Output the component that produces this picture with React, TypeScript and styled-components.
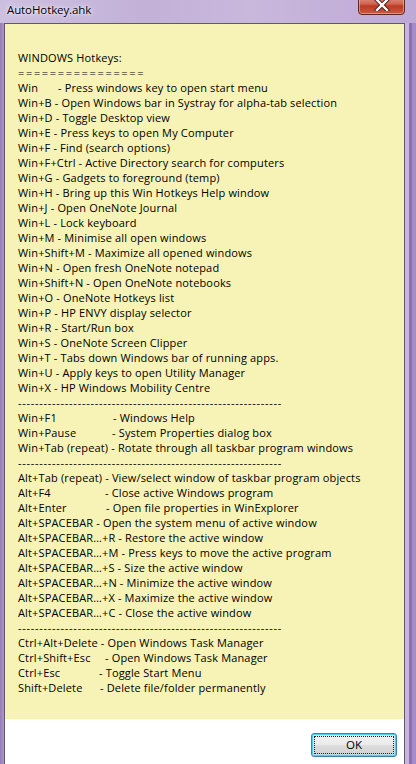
import React from 'react';
import styled, { createGlobalStyle } from 'styled-components';

const Global = createGlobalStyle`
  html, body { margin: 0; padding: 0; width: 416px; height: 764px; overflow: hidden; }
  body { font-family: "Open Sans", "Noto Sans", sans-serif; -webkit-font-smoothing: antialiased; }
  #root { width: 416px; height: 764px; }
`;

const Window = styled.div`
  width: 416px;
  height: 764px;
  box-sizing: border-box;
  display: flex;
  flex-direction: column;
  padding: 0 11px 0 4px;
  background:
    linear-gradient(to right, #c9b4e0 0, #c9b4e0 4px, #8a72b0 4px, #8a72b0 7px, #a68cc6 7px, #a68cc6 11px) right 23px / 11px 100% no-repeat,
    linear-gradient(to right, #967bbb 0, #a288c4 2px, #ae96cd 4px) left 23px / 4px 100% no-repeat,
    linear-gradient(to right, #cdbfe0 0%, #c3b1d8 35%, #c9b8dc 60%, #bfa9d6 100%);
`;

const TitleBar = styled.div`
  height: 23px;
  flex: none;
  display: flex;
  justify-content: space-between;
  align-items: flex-start;
  padding-left: 3px;
`;

const Title = styled.span`
  font-size: 11.5px;
  letter-spacing: -0.1px;
  line-height: 20px;
  color: #000;
  text-shadow: 0 0 6px rgba(255, 255, 255, 0.9), 0 0 3px rgba(255, 255, 255, 0.8);
`;

const CloseBtn = styled.div`
  width: 47px;
  height: 20px;
  margin-top: -5px;
  box-sizing: border-box;
  border: 1px solid #5a2a26;
  border-radius: 0 0 4px 4px;
  background: linear-gradient(to bottom, #e3978a 0%, #d0634f 45%, #bb3a24 55%, #cc5a43 100%);
  box-shadow: inset 0 0 0 1px rgba(255, 200, 190, 0.5);
  display: flex;
  align-items: center;
  justify-content: center;
`;

const Client = styled.div`
  flex: 1;
  display: flex;
  flex-direction: column;
  border: 1px solid #5c5a68;
  border-bottom: none;
  min-height: 0;
`;

const Memo = styled.div`
  background: #f7f3b6;
  padding: 26px 0 24px 13px;
  font-size: 11px;
  line-height: 15px;
  letter-spacing: 0.15px;
  color: #000;
`;

const Line = styled.div`
  white-space: pre;
  height: 15px;
`;

const Key = styled.span<{ $w: number }>`
  display: inline-block;
  width: ${(p) => p.$w}px;
`;

const Rule = styled.div<{ $ls: number }>`
  white-space: pre;
  height: 15px;
  letter-spacing: ${(p) => p.$ls}px;
`;

const Footer = styled.div`
  flex: 1;
  background: #ffffff;
  display: flex;
  justify-content: flex-end;
  align-items: flex-start;
  padding: 14px 7px 0 0;
`;

const OkButton = styled.button`
  width: 86px;
  height: 24px;
  box-sizing: border-box;
  border: 1px solid #3c7fb1;
  border-radius: 3px;
  padding: 2px;
  background: linear-gradient(to bottom, #f2f2f2 0%, #ebebeb 48%, #dddddd 52%, #cfcfcf 100%);
  box-shadow: inset 0 0 0 1px #48d1f4, inset 0 0 0 2px rgba(180, 235, 250, 0.7);
  font-family: "Open Sans", "Noto Sans", sans-serif;
  font-size: 11.5px;
  color: #000;
  cursor: default;
  display: flex;
`;

const Focus = styled.span`
  flex: 1;
  border: 1px dotted #222;
  display: flex;
  align-items: center;
  justify-content: center;
  line-height: 14px;
`;

type Row =
  | { text: string }
  | { key: string; desc: string; at: number }
  | { rule: string; ls: number };

const dashes = '-'.repeat(62);

const rows: Row[] = [
  { text: 'WINDOWS Hotkeys:' },
  { rule: '='.repeat(16), ls: 1.66 },
  { key: 'Win', desc: 'Press windows key to open start menu', at: 40 },
  { text: 'Win+B - Open Windows bar in Systray for alpha-tab selection' },
  { text: 'Win+D - Toggle Desktop view' },
  { text: 'Win+E - Press keys to open My Computer' },
  { text: 'Win+F - Find (search options)' },
  { text: 'Win+F+Ctrl - Active Directory search for computers' },
  { text: 'Win+G - Gadgets to foreground (temp)' },
  { text: 'Win+H - Bring up this Win Hotkeys Help window' },
  { text: 'Win+J - Open OneNote Journal' },
  { text: 'Win+L - Lock keyboard' },
  { text: 'Win+M - Minimise all open windows' },
  { text: 'Win+Shift+M - Maximize all opened windows' },
  { text: 'Win+N - Open fresh OneNote notepad' },
  { text: 'Win+Shift+N - Open OneNote notebooks' },
  { text: 'Win+O - OneNote Hotkeys list' },
  { text: 'Win+P - HP ENVY display selector' },
  { text: 'Win+R - Start/Run box' },
  { text: 'Win+S - OneNote Screen Clipper' },
  { text: 'Win+T - Tabs down Windows bar of running apps.' },
  { text: 'Win+U - Apply keys to open Utility Manager' },
  { text: 'Win+X - HP Windows Mobility Centre' },
  { rule: dashes, ls: 0.72 },
  { key: 'Win+F1', desc: 'Windows Help', at: 95 },
  { key: 'Win+Pause', desc: 'System Properties dialog box', at: 94 },
  { text: 'Win+Tab (repeat) - Rotate through all taskbar program windows' },
  { rule: dashes, ls: 0.72 },
  { text: 'Alt+Tab (repeat) - View/select window of taskbar program objects' },
  { key: 'Alt+F4', desc: 'Close active Windows program', at: 87 },
  { key: 'Alt+Enter', desc: 'Open file properties in WinExplorer', at: 88 },
  { text: 'Alt+SPACEBAR - Open the system menu of active window' },
  { text: 'Alt+SPACEBAR…+R - Restore the active window' },
  { text: 'Alt+SPACEBAR…+M - Press keys to move the active program' },
  { text: 'Alt+SPACEBAR…+S - Size the active window' },
  { text: 'Alt+SPACEBAR…+N - Minimize the active window' },
  { text: 'Alt+SPACEBAR…+X - Maximize the active window' },
  { text: 'Alt+SPACEBAR…+C - Close the active window' },
  { rule: dashes, ls: 0.72 },
  { text: 'Ctrl+Alt+Delete - Open Windows Task Manager' },
  { key: 'Ctrl+Shift+Esc', desc: 'Open Windows Task Manager', at: 87 },
  { key: 'Ctrl+Esc', desc: 'Toggle Start Menu', at: 81 },
  { key: 'Shift+Delete', desc: 'Delete file/folder permanently', at: 82 },
];

const CloseIcon = () => (
  <svg width="16" height="12" viewBox="0 0 16 12">
    <path d="M3 1 L13 11 M13 1 L3 11" stroke="#4a1a16" strokeWidth="4.2" strokeLinecap="square" />
    <path d="M3 1 L13 11 M13 1 L3 11" stroke="#ffffff" strokeWidth="2.4" strokeLinecap="square" />
  </svg>
);

export default function App() {
  return (
    <>
      <Global />
      <Window>
        <TitleBar>
          <Title>AutoHotkey.ahk</Title>
          <CloseBtn>
            <CloseIcon />
          </CloseBtn>
        </TitleBar>
        <Client>
          <Memo>
            {rows.map((r, i) => {
              if ('rule' in r) return <Rule key={i} $ls={r.ls}>{r.rule}</Rule>;
              if ('key' in r)
                return (
                  <Line key={i}>
                    <Key $w={r.at}>{r.key}</Key>- {r.desc}
                  </Line>
                );
              return <Line key={i}>{r.text}</Line>;
            })}
          </Memo>
          <Footer>
            <OkButton>
              <Focus>OK</Focus>
            </OkButton>
          </Footer>
        </Client>
      </Window>
    </>
  );
}
